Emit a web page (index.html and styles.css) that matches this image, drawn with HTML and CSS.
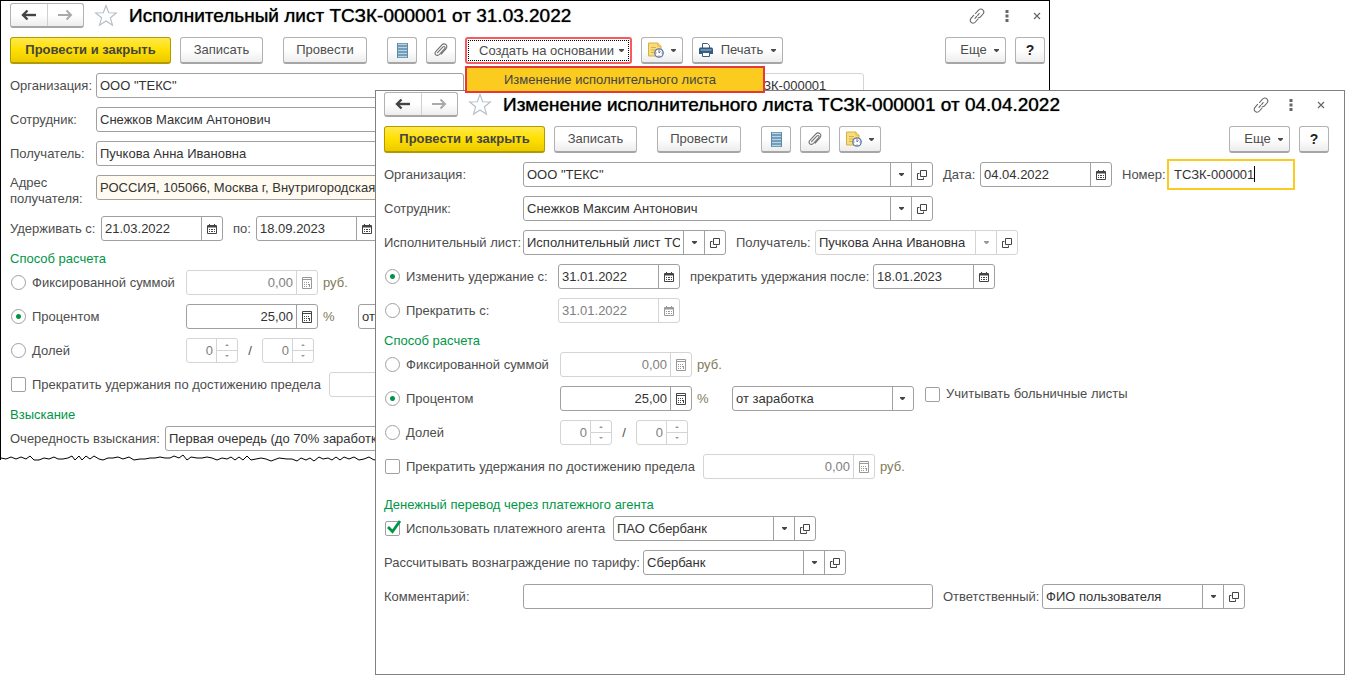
FILE: index.html
```html
<!DOCTYPE html>
<html lang="ru">
<head>
<meta charset="utf-8">
<title>Изменение исполнительного листа</title>
<link rel="stylesheet" href="styles.css">
</head>
<body>
<svg class="sprite" aria-hidden="true">
  <symbol id="i-back" viewBox="0 0 16 12"><path d="M2 6h13" stroke="currentColor" stroke-width="2.4" fill="none"/><path d="M6.5 1.5 2 6l4.500 4.500" stroke="currentColor" stroke-width="2.400" fill="none"/></symbol>
  <symbol id="i-fwd" viewBox="0 0 16 12"><path d="M1 6h13M9.500 1.500 14 6l-4.500 4.500" stroke="currentColor" stroke-width="2" fill="none"/></symbol>
  <symbol id="i-star" viewBox="0 0 24 23"><path d="M12 1.500l2.700 7.200 7.700.3-6 4.800 2.100 7.500-6.500-4.300-6.500 4.300 2.100-7.500-6-4.800 7.700-.3z" fill="#fff" stroke="#b4bcc6" stroke-width="1.100"/></symbol>
  <symbol id="i-link" viewBox="0 0 16 16"><g fill="none" stroke="#666" stroke-width="1.100" stroke-linecap="round"><path d="M6.500 5.500 9.500 2.200c1.200-1.400 3.100-1.500 4.300-.4s1.300 2.800.2 4.200L11.500 8.800c-.6.700-1.500 1-2.300.9"/><path d="M4.600 7.400 2 10.300c-1.100 1.300-1 3.100.2 4.100s3 .9 4.200-.4L9 11"/><path d="M6 10.300 10.200 5.600" stroke-dasharray="2.500 1.500"/></g></symbol>
  <symbol id="i-dots" viewBox="0 0 4 12"><path d="M.5 0h3v3h-3zM.5 4.500h3v3h-3zM.5 9h3v3h-3z" fill="#666"/></symbol>
  <symbol id="i-close" viewBox="0 0 8 8"><path d="M1 1l6 6M7 1 1 7" stroke="#666" stroke-width="1.200"/></symbol>
  <symbol id="i-list" viewBox="0 0 11 15"><path d="M0 0h11v15H0z" fill="#5c8aaa"/><path d="M1 1.500h9M1 4.500h9M1 7.500h9M1 10.500h9M1 13.500h9" stroke="#b9d5e6" stroke-width="1.600"/></symbol>
  <symbol id="i-clip" viewBox="0 0 14 14"><path d="M3.600 9.700 9 3.900c.6-.6 1.400-.6 1.800-.1s.4 1.200-.1 1.800L5.300 11.500c-1 1.100-2.600 1.200-3.500.3s-.9-2.400.1-3.500L7.700 2.100c1.300-1.400 3.100-1.500 4.300-.4s1.100 3-.1 4.300L7.200 11.100" fill="none" stroke="#707070" stroke-width="1.100" stroke-linecap="round"/></symbol>
  <symbol id="i-note" viewBox="0 0 16 16"><path d="M.5 1h9.500l3 3v10H.5z" fill="#f8dd80" stroke="#d9af3d"/><path d="M10 1v3h3" fill="#fff1b8" stroke="#d9af3d"/><path d="M3 5.500h5M3 8h4M3 10.500h3" stroke="#d9af3d"/><circle cx="11" cy="11" r="4.200" fill="#fff" stroke="#4f7fae" stroke-width="1.300"/><path d="M11 11V8.500M11 11l1.500-1.500" stroke="#55779a" fill="none"/><path d="M10.500 7.500h1v1h-1zM10.500 13.500h1v1h-1zM7.500 10.500h1v1h-1zM13.500 10.500h1v1h-1z" fill="#e03b2e"/></symbol>
  <symbol id="i-print" viewBox="0 0 14 14"><path d="M3.500 5V.5h5l2 2V5" fill="#fff" stroke="#3d607e"/><path d="M0 5.500 1 4.500h12l1 1V11H0z" fill="#315b80"/><path d="M1.500 7h11" stroke="#a9c6dc"/><path d="M3.500 9.500h7v4h-7z" fill="#fff" stroke="#3d607e"/></symbol>
  <symbol id="i-tri" viewBox="0 0 5 3"><path d="M0 0h5v1L3 3H2L0 1z" fill="currentColor"/></symbol>
  <symbol id="i-open" viewBox="0 0 10 10"><path d="M3.500.5h6v6h-6zM2.500 3.500h-2v6h6v-2" fill="none" stroke="currentColor"/></symbol>
  <symbol id="i-cal" viewBox="0 0 10 10"><path d="M.5 1.500h9v8h-9z" fill="none" stroke="currentColor"/><path d="M1 1h8v2.500H1zM2 0h1v1H2zM7 0h1v1H7zM2 5h1v1H2zM4 5h2v1H4zM7 5h1v1H7zM2 7h1v1H2zM4 7h2v1H4zM7 7h1v1H7z" fill="currentColor"/></symbol>
  <symbol id="i-calc" viewBox="0 0 10 12"><path d="M.5.5h9v11h-9z" fill="none" stroke="currentColor"/><path d="M1 2h8v1H1zM2 5h1v1H2zM4 5h1v1H4zM6 5h1v1H6zM2 7h1v1H2zM4 7h1v1H4zM6 7h1v1H6zM2 9h1v1H2zM4 9h1v1H4zM7 7h1v3H7z" fill="currentColor"/></symbol>
  <symbol id="i-spin" viewBox="0 0 20 23"><path d="M0 11.500h20" stroke="#d4d4d4"/><path d="M10 5 12 7H8zM10 18l2-2H8z" fill="#999"/></symbol>
  <symbol id="i-check" viewBox="0 0 16 14"><path d="M2 7l4.500 4.500L14 1" fill="none" stroke="#009646" stroke-width="2.800"/></symbol>
</svg>

<main class="desktop">
  <section class="window window-back">
    <header class="titlebar">
      <div class="nav"><button type="button" aria-label="Назад"><svg><use href="#i-back"/></svg></button><button type="button" aria-label="Вперед" class="nav-off"><svg><use href="#i-fwd"/></svg></button></div>
      <svg class="star"><use href="#i-star"/></svg>
      <h1>Исполнительный лист ТСЗК-000001 от 31.03.2022</h1>
      <div class="wintools"><svg class="w-link"><use href="#i-link"/></svg><svg class="w-dots"><use href="#i-dots"/></svg><svg class="w-close"><use href="#i-close"/></svg></div>
    </header>
    <div class="toolbar">
      <button type="button" class="btn primary">Провести и закрыть</button>
      <button type="button" class="btn save">Записать</button>
      <button type="button" class="btn post">Провести</button>
      <button type="button" class="btn icon" aria-label="Список"><svg class="g-list"><use href="#i-list"/></svg></button>
      <button type="button" class="btn icon" aria-label="Файлы"><svg class="g-clip"><use href="#i-clip"/></svg></button>
      <div class="dropdown">
        <button type="button" class="btn create"><span>Создать на основании</span><svg class="g-tri"><use href="#i-tri"/></svg></button>
        <button type="button" class="menu-item">Изменение исполнительного листа</button>
      </div>
      <button type="button" class="btn wide-icon" aria-label="Напоминание"><svg class="g-note"><use href="#i-note"/></svg><svg class="g-tri"><use href="#i-tri"/></svg></button>
      <button type="button" class="btn print"><svg class="g-print"><use href="#i-print"/></svg><span>Печать</span><svg class="g-tri"><use href="#i-tri"/></svg></button>
      <div class="toolbar-end">
        <button type="button" class="btn more"><span>Еще</span><svg class="g-tri"><use href="#i-tri"/></svg></button>
        <button type="button" class="btn icon help">?</button>
      </div>
    </div>
    <form class="form">
      <div class="row">
        <label class="lab-back" for="b-org">Организация:</label>
        <div class="field f-wide"><input id="b-org" value="ООО &quot;ТЕКС&quot;"></div>
        <div class="field off f-number"><input id="b-num" aria-label="Номер" value="ТСЗК-000001" readonly></div>
      </div>
      <div class="row">
        <label class="lab-back" for="b-emp">Сотрудник:</label>
        <div class="field f-long"><input id="b-emp" value="Снежков Максим Антонович"></div>
      </div>
      <div class="row">
        <label class="lab-back" for="b-rec">Получатель:</label>
        <div class="field f-long"><input id="b-rec" value="Пучкова Анна Ивановна"></div>
      </div>
      <div class="row row-tall">
        <label class="lab-back" for="b-adr">Адрес получателя:</label>
        <div class="field f-long tinted"><input id="b-adr" value="РОССИЯ, 105066, Москва г, Внутригородская территория"></div>
      </div>
      <div class="row">
        <label class="lab-hold" for="b-from">Удерживать с:</label>
        <div class="field f-date"><input id="b-from" value="21.03.2022"><button type="button" aria-label="Календарь"><svg class="g-cal"><use href="#i-cal"/></svg></button></div>
        <label class="lab-to" for="b-to">по:</label>
        <div class="field f-date"><input id="b-to" value="18.09.2023"><button type="button" aria-label="Календарь"><svg class="g-cal"><use href="#i-cal"/></svg></button></div>
      </div>
      <h2>Способ расчета</h2>
      <div class="row">
        <label class="opt opt-amount"><input type="radio" name="b-way">Фиксированной суммой</label>
        <div class="field off f-amount num"><input aria-label="Сумма" value="0,00" disabled><button type="button" aria-label="Калькулятор" disabled><svg class="g-calc"><use href="#i-calc"/></svg></button></div>
        <span class="unit">руб.</span>
      </div>
      <div class="row">
        <label class="opt opt-amount"><input type="radio" name="b-way" checked>Процентом</label>
        <div class="field f-amount num"><input aria-label="Процент" value="25,00"><button type="button" aria-label="Калькулятор"><svg class="g-calc"><use href="#i-calc"/></svg></button></div>
        <span class="unit unit-pct">%</span>
        <div class="field f-select"><select aria-label="База"><option>от заработка</option></select><svg class="g-tri"><use href="#i-tri"/></svg></div>
      </div>
      <div class="row">
        <label class="opt opt-amount"><input type="radio" name="b-way">Долей</label>
        <div class="field off f-spin num"><input aria-label="Числитель" value="0" disabled><svg class="spin"><use href="#i-spin"/></svg></div>
        <span class="slash">/</span>
        <div class="field off f-spin num"><input aria-label="Знаменатель" value="0" disabled><svg class="spin"><use href="#i-spin"/></svg></div>
      </div>
      <div class="row">
        <label class="opt opt-limit"><input type="checkbox">Прекратить удержания по достижению предела</label>
        <div class="field off f-limit num"><input aria-label="Предел" value="0,00" disabled></div>
      </div>
      <h2>Взыскание</h2>
      <div class="row row-last">
        <label class="lab-queue" for="b-queue">Очередность взыскания:</label>
        <div class="field f-long"><select id="b-queue"><option>Первая очередь (до 70% заработка)</option></select></div>
      </div>
    </form>
    <svg class="torn" viewBox="0 0 1050 6" preserveAspectRatio="xMinYMin slice"><path fill="none" stroke="#000" d="M0 4l5 1 5-2 5 2 5-2 5 2 4-3 4 4 5 0 5-2 5 1 5-2 4 2 5 0 5-1 4-2 3 4 4-4 3 4 4-4 4 3 4-3 5 3 4 1 5-2 5 0 5-1 5 2 6-2 5 3 6-1 5 0 5-1 5 0 5-1 5 1 5 0 4-2 5 2 4-3 4 5 4-3 6 1 5 0 5-1 5 1 5 2 5-2 5 1 4-2 4 3 4-3 4 3 4-4 4 4 5-1 5-1 5 1 5 2 8-3 8 1 5 0 5 2 4-3 5 2 4-2 4 3 5-4 4 2 5-1 4 2 4-3 4 3 4-3 5 2 5-2 5 3 5-1 5-2 5 3 5-2 5 2 5-2 5 2"/></svg>
  </section>

  <section class="window window-front">
    <header class="titlebar">
      <div class="nav"><button type="button" aria-label="Назад"><svg><use href="#i-back"/></svg></button><button type="button" aria-label="Вперед" class="nav-off"><svg><use href="#i-fwd"/></svg></button></div>
      <svg class="star"><use href="#i-star"/></svg>
      <h1>Изменение исполнительного листа ТСЗК-000001 от 04.04.2022</h1>
      <div class="wintools"><svg class="w-link"><use href="#i-link"/></svg><svg class="w-dots"><use href="#i-dots"/></svg><svg class="w-close"><use href="#i-close"/></svg></div>
    </header>
    <div class="toolbar">
      <button type="button" class="btn primary">Провести и закрыть</button>
      <button type="button" class="btn save">Записать</button>
      <button type="button" class="btn post">Провести</button>
      <button type="button" class="btn icon" aria-label="Список"><svg class="g-list"><use href="#i-list"/></svg></button>
      <button type="button" class="btn icon" aria-label="Файлы"><svg class="g-clip"><use href="#i-clip"/></svg></button>
      <button type="button" class="btn wide-icon" aria-label="Напоминание"><svg class="g-note"><use href="#i-note"/></svg><svg class="g-tri"><use href="#i-tri"/></svg></button>
      <div class="toolbar-end">
        <button type="button" class="btn more"><span>Еще</span><svg class="g-tri"><use href="#i-tri"/></svg></button>
        <button type="button" class="btn icon help">?</button>
      </div>
    </div>
    <form class="form">
      <div class="row">
        <label class="lab-front" for="f-org">Организация:</label>
        <div class="field f-long"><input id="f-org" value="ООО &quot;ТЕКС&quot;"><button type="button" aria-label="Выбрать"><svg class="g-tri"><use href="#i-tri"/></svg></button><button type="button" aria-label="Открыть"><svg class="g-open"><use href="#i-open"/></svg></button></div>
        <label class="lab-date" for="f-date">Дата:</label>
        <div class="field f-amount"><input id="f-date" value="04.04.2022"><button type="button" aria-label="Календарь"><svg class="g-cal"><use href="#i-cal"/></svg></button></div>
        <label class="lab-num" for="f-num">Номер:</label>
        <div class="field f-date focused"><input id="f-num" value="ТСЗК-000001"><i class="caret"></i></div>
      </div>
      <div class="row">
        <label class="lab-front" for="f-emp">Сотрудник:</label>
        <div class="field f-long"><input id="f-emp" value="Снежков Максим Антонович"><button type="button" aria-label="Выбрать"><svg class="g-tri"><use href="#i-tri"/></svg></button><button type="button" aria-label="Открыть"><svg class="g-open"><use href="#i-open"/></svg></button></div>
      </div>
      <div class="row">
        <label class="lab-front" for="f-doc">Исполнительный лист:</label>
        <div class="field f-mid"><input id="f-doc" value="Исполнительный лист ТСЗК-000001"><button type="button" aria-label="Выбрать"><svg class="g-tri"><use href="#i-tri"/></svg></button><button type="button" aria-label="Открыть"><svg class="g-open"><use href="#i-open"/></svg></button></div>
        <label class="lab-rec" for="f-rec">Получатель:</label>
        <div class="field f-mid readonly"><input id="f-rec" value="Пучкова Анна Ивановна" readonly><button type="button" aria-label="Выбрать" disabled><svg class="g-tri"><use href="#i-tri"/></svg></button><button type="button" aria-label="Открыть"><svg class="g-open"><use href="#i-open"/></svg></button></div>
      </div>
      <div class="row">
        <label class="opt opt-change"><input type="radio" name="f-act" checked>Изменить удержание с:</label>
        <div class="field f-date"><input aria-label="Изменить с" value="31.01.2022"><button type="button" aria-label="Календарь"><svg class="g-cal"><use href="#i-cal"/></svg></button></div>
        <label class="lab-after" for="f-after">прекратить удержания после:</label>
        <div class="field f-date"><input id="f-after" value="18.01.2023"><button type="button" aria-label="Календарь"><svg class="g-cal"><use href="#i-cal"/></svg></button></div>
      </div>
      <div class="row">
        <label class="opt opt-change"><input type="radio" name="f-act">Прекратить с:</label>
        <div class="field off f-date"><input aria-label="Прекратить с" value="31.01.2022" disabled><button type="button" aria-label="Календарь" disabled><svg class="g-cal"><use href="#i-cal"/></svg></button></div>
      </div>
      <h2>Способ расчета</h2>
      <div class="row">
        <label class="opt opt-amount"><input type="radio" name="f-way">Фиксированной суммой</label>
        <div class="field off f-amount num"><input aria-label="Сумма" value="0,00" disabled><button type="button" aria-label="Калькулятор" disabled><svg class="g-calc"><use href="#i-calc"/></svg></button></div>
        <span class="unit">руб.</span>
      </div>
      <div class="row">
        <label class="opt opt-amount"><input type="radio" name="f-way" checked>Процентом</label>
        <div class="field f-amount num"><input aria-label="Процент" value="25,00"><button type="button" aria-label="Калькулятор"><svg class="g-calc"><use href="#i-calc"/></svg></button></div>
        <span class="unit unit-pct">%</span>
        <div class="field f-select"><select aria-label="База"><option>от заработка</option></select><svg class="g-tri"><use href="#i-tri"/></svg></div>
        <label class="opt opt-sick"><input type="checkbox">Учитывать больничные листы</label>
      </div>
      <div class="row">
        <label class="opt opt-amount"><input type="radio" name="f-way">Долей</label>
        <div class="field off f-spin num"><input aria-label="Числитель" value="0" disabled><svg class="spin"><use href="#i-spin"/></svg></div>
        <span class="slash">/</span>
        <div class="field off f-spin num"><input aria-label="Знаменатель" value="0" disabled><svg class="spin"><use href="#i-spin"/></svg></div>
      </div>
      <div class="row">
        <label class="opt opt-limit"><input type="checkbox">Прекратить удержания по достижению предела</label>
        <div class="field off f-limit num"><input aria-label="Предел" value="0,00" disabled><button type="button" aria-label="Калькулятор" disabled><svg class="g-calc"><use href="#i-calc"/></svg></button></div>
        <span class="unit">руб.</span>
      </div>
      <h2 class="spaced">Денежный перевод через платежного агента</h2>
      <div class="row">
        <label class="opt opt-agent"><input type="checkbox" checked><svg class="tick"><use href="#i-check"/></svg>Использовать платежного агента</label>
        <div class="field f-mid"><input aria-label="Платежный агент" value="ПАО Сбербанк"><button type="button" aria-label="Выбрать"><svg class="g-tri"><use href="#i-tri"/></svg></button><button type="button" aria-label="Открыть"><svg class="g-open"><use href="#i-open"/></svg></button></div>
      </div>
      <div class="row">
        <label class="lab-tariff" for="f-tariff">Рассчитывать вознаграждение по тарифу:</label>
        <div class="field f-mid"><input id="f-tariff" value="Сбербанк"><button type="button" aria-label="Выбрать"><svg class="g-tri"><use href="#i-tri"/></svg></button><button type="button" aria-label="Открыть"><svg class="g-open"><use href="#i-open"/></svg></button></div>
      </div>
      <div class="row">
        <label class="lab-front" for="f-comm">Комментарий:</label>
        <div class="field f-long"><input id="f-comm" value=""></div>
        <label class="lab-resp" for="f-resp">Ответственный:</label>
        <div class="field f-mid"><input id="f-resp" value="ФИО пользователя"><button type="button" aria-label="Выбрать"><svg class="g-tri"><use href="#i-tri"/></svg></button><button type="button" aria-label="Открыть"><svg class="g-open"><use href="#i-open"/></svg></button></div>
      </div>
    </form>
  </section>
</main>
</body>
</html>
```

FILE: styles.css
```css
* { box-sizing: border-box; }
body {
  margin: 0;
  background: #fff;
  color: #4d4d4d;
  font: 13px/16px "Liberation Sans", Arial, sans-serif;
}
input, select, button { font: inherit; color: inherit; margin: 0; }
svg { display: block; flex: none; }
.sprite { position: absolute; width: 0; height: 0; }

/* Overlapping windows; the open menu stays above both */
.desktop { position: relative; min-height: 100vh; overflow: hidden; }
.window { position: absolute; background: #fff; }
.window-back {
  top: 0; left: 0; right: 297px;
  border: 1px solid #000;
  border-bottom: 0;
}
.window-front {
  top: 90px; left: 375px; right: 2px; bottom: 3px; z-index: 2;
  border: 1px solid #808080;
}
.window-back > .titlebar, .window-back > .toolbar, .window-back > .form { padding-left: 9px; padding-right: 4px; }
.window-front > .titlebar, .window-front > .toolbar, .window-front > .form { padding-left: 8px; padding-right: 15px; }
.window-back > .titlebar { margin-top: 2px; }
.window-front > .titlebar { margin-top: 1px; }

.titlebar { display: flex; align-items: center; height: 25px; margin-bottom: 9px; white-space: nowrap; }
.nav {
  display: flex; width: 74px; height: 25px;
  border: 1px solid #b2b2b2; border-bottom: 2px solid #a6a6a6; border-radius: 3px;
  background: linear-gradient(#fff 50%, #ededed);
}
.nav button { display: flex; flex: 1; align-items: center; justify-content: center; padding: 0; border: 0; background: none; color: #444; }
.nav .nav-off { border-left: 1px solid #d0d0d0; color: #aaa; }
.nav svg { width: 16px; height: 12px; }
.star { width: 24px; height: 23px; margin: 0 11px 0 10px; }
h1 { margin: 0; color: #000; font-size: 19px; line-height: 24px; font-weight: 400; text-shadow: 0 0 1px #333; }
.wintools { display: flex; align-items: center; margin-left: auto; margin-right: 4px; }
.w-link { width: 16px; height: 16px; }
.w-dots { width: 4px; height: 12px; margin: 0 24px 0 20px; }
.w-close { width: 8px; height: 8px; }

.toolbar { display: flex; gap: 9px; height: 27px; margin-bottom: 9px; white-space: nowrap; }
.btn {
  display: flex; align-items: center; justify-content: center;
  height: 27px; padding: 0;
  border: 1px solid #b2b2b2; border-bottom: 2px solid #a6a6a6; border-radius: 3px;
  background: linear-gradient(#fff 50%, #ededed);
}
.btn.primary { width: 161px; border-color: #b09c00; background: linear-gradient(#ffe94d, #ffe000 50%, #ecca00); color: #444; font-weight: 700; }
.btn.save { width: 83px; }
.btn.post { width: 84px; margin: 0 11px; }
.btn.icon { width: 30px; }
.btn.wide-icon { width: 42px; gap: 7px; }
.btn.print { width: 91px; gap: 8px; }
.btn.more { width: 61px; gap: 7px; padding-left: 8px; }
.btn.help { color: #222; font-size: 14px; font-weight: 700; }
.btn.create { width: 167px; gap: 5px; padding-left: 6px; border: 2px solid #f75a5e; outline: 1px dotted #000; outline-offset: -4px; background: #fff; }
.toolbar-end { display: flex; gap: 9px; margin-left: auto; }
.dropdown { position: relative; z-index: 3; width: 167px; }
.menu-item {
  position: absolute; top: 29px; left: 0; width: 300px; height: 27px; padding: 0 0 0 37px;
  border: 2px solid #e5383b; background: #fbcb20; color: #444; text-align: left;
}
.g-list { width: 11px; height: 15px; }
.g-clip { width: 14px; height: 14px; }
.g-note { width: 16px; height: 16px; }
.g-print { width: 14px; height: 14px; }
.g-tri { width: 5px; height: 3px; }
.g-open { width: 10px; height: 10px; }
.g-cal { width: 10px; height: 10px; }
.g-calc { width: 10px; height: 12px; }

/* Form rows */
.row { display: flex; align-items: center; height: 25px; margin-bottom: 9px; white-space: nowrap; }
.row > * { flex: none; }
.row-tall { align-items: flex-start; height: 32px; white-space: normal; }
.row-last { margin-bottom: 3px; }
h2 { margin: 0 0 3px; padding-top: 1px; color: #009646; font-size: 13px; line-height: 16px; font-weight: 400; }
h2.spaced { margin-top: 17px; }

.lab-back { width: 86px; }
.lab-front { width: 139px; }
.lab-date { width: 47px; padding-left: 10px; }
.lab-num { width: 57px; padding-left: 10px; }
.lab-hold { width: 91px; }
.lab-to { width: 33px; padding-left: 10px; }
.lab-queue { width: 155px; }
.lab-rec { width: 89px; padding-left: 10px; }
.lab-after { width: 193px; padding-left: 10px; }
.lab-tariff { width: 259px; }
.lab-resp { width: 109px; padding-left: 10px; }

.opt { display: flex; align-items: center; gap: 6px; padding-left: 1px; position: relative; }
.opt-change { width: 174px; }
.opt-amount { width: 176px; }
.opt-limit { width: 319px; }
.opt-agent { width: 229px; }
.opt-sick { align-self: flex-start; padding-left: 11px; }
.opt input { appearance: none; width: 15px; height: 15px; border: 1px solid #a0a0a0; background: #fff; flex: none; }
.opt input[type="radio"] { border-radius: 50%; }
.opt input[type="radio"]:checked { background: radial-gradient(circle, #009646 2px, #fff 3px); }
.opt input[type="checkbox"] { border-radius: 2px; }
.tick { position: absolute; left: 2px; top: -1px; width: 16px; height: 14px; }

.field { display: flex; align-items: stretch; height: 25px; border: 1px solid #a0a0a0; border-radius: 3px; background: #fff; color: #333; position: relative; }
.field input, .field select { flex: 1; min-width: 0; width: 100%; padding: 0 3px; border: 0; outline: 0; background: none; appearance: none; }
.field button { display: flex; align-items: center; justify-content: center; width: 21px; flex: none; padding: 0; border: 0; border-left: 1px solid #a0a0a0; background: none; color: #444; }
.field.off, .field.readonly, .off button, .readonly button { border-color: #d4d4d4; }
.off input:disabled { color: #808080; }
.off button, .field button:disabled { color: #999; }
.num input { text-align: right; }
.tinted { background: #fffbf0; }
.f-long { width: 410px; }
.f-wide { width: 368px; }
.f-mid { width: 203px; }
.f-date { width: 122px; }
.f-number { width: 122px; margin-left: 278px; }
.f-amount { width: 132px; }
.f-limit { width: 172px; }
.f-spin { width: 52px; }
.f-select { width: 182px; }
.f-select::after { content: ""; order: 1; border-left: 1px solid #a0a0a0; }
.f-select .g-tri { order: 2; align-self: center; margin: 0 8px 0 7px; color: #444; }
.spin { width: 21px; height: 23px; border-left: 1px solid #d4d4d4; }
.unit { padding-left: 5px; color: #7f7a58; }
.unit-pct { width: 40px; }
.slash { width: 24px; text-align: center; }
.focused { margin-left: 1px; border-color: transparent; outline: 2px solid #fbcb20; outline-offset: 1px; border-radius: 0; }
.caret { position: absolute; left: 83px; top: 3px; width: 1px; height: 16px; background: #000; }
.torn { width: 100%; height: 6px; overflow: visible; }
```
